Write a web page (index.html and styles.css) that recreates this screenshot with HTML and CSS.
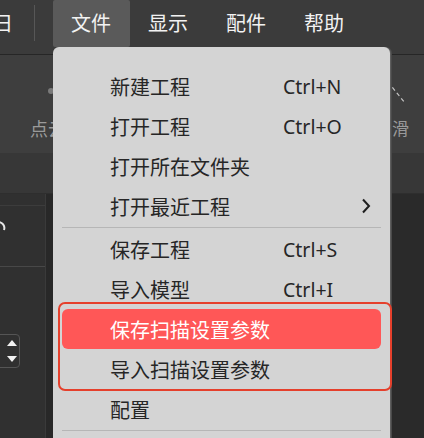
FILE: index.html
```html
<!DOCTYPE html>
<html lang="zh">
<head>
<meta charset="utf-8">
<link rel="stylesheet" href="styles.css">
</head>
<body>
<div class="app">
  <div class="menubar">
    <span class="cut">日</span>
    <span class="vsep"></span>
    <span class="mitem active">文件</span>
    <span class="mitem">显示</span>
    <span class="mitem">配件</span>
    <span class="mitem">帮助</span>
  </div>
  <div class="toolbar">
    <div class="tool left">
      <span class="dot"></span>
      <span class="tlabel">点云</span>
    </div>
    <div class="tool right">
      <svg class="dash" width="20" height="24" viewBox="0 0 20 24"><path d="M1 1 L18 22" stroke="#c4c4c4" stroke-width="1.2" stroke-dasharray="4 3" fill="none"/></svg>
      <span class="tlabel">滑</span>
    </div>
  </div>
  <div class="band"></div>
  <div class="main">
    <div class="lpanel">
      <div class="box">
        <svg class="arc" width="10" height="14" viewBox="0 0 10 14"><path d="M0 2 A6 6 0 0 1 6 10" stroke="#e6e6e6" stroke-width="2" fill="none"/></svg>
      </div>
      <div class="spin">
        <svg width="12" height="30" viewBox="0 0 12 30"><path d="M1 10 L6 4 L11 10 Z" fill="#f2f2f2"/><path d="M1 20 L11 20 L6 26 Z" fill="#f2f2f2"/></svg>
      </div>
    </div>
    <div class="gutter"></div>
    <div class="rest"></div>
  </div>
</div>

<div class="dropdown">
  <div class="row"><span>新建工程</span><span class="sc">Ctrl+N</span></div>
  <div class="row"><span>打开工程</span><span class="sc">Ctrl+O</span></div>
  <div class="row"><span>打开所在文件夹</span><span class="sc"></span></div>
  <div class="row"><span>打开最近工程</span><span class="sc"></span><svg class="arrow" width="10" height="16" viewBox="0 0 10 16"><path d="M2 1.5 L8 8 L2 14.5" stroke="#1e1e1e" stroke-width="2" fill="none"/></svg></div>
  <div class="sep"></div>
  <div class="row"><span>保存工程</span><span class="sc">Ctrl+S</span></div>
  <div class="row"><span>导入模型</span><span class="sc">Ctrl+I</span></div>
  <div class="row hl"><span>保存扫描设置参数</span><span class="sc"></span></div>
  <div class="row"><span>导入扫描设置参数</span><span class="sc"></span></div>
  <div class="row"><span>配置</span><span class="sc"></span></div>
  <div class="sep"></div>
  <div class="mark"></div>
</div>
</body>
</html>
```

FILE: styles.css
```css
html, body {
  margin: 0;
  padding: 0;
  width: 424px;
  height: 438px;
  overflow: hidden;
}
body {
  background: #2b2b2b;
  font-family: "Noto Sans", "Noto Sans CJK SC", sans-serif;
  position: relative;
}
.app {
  display: flex;
  flex-direction: column;
  height: 438px;
}
.menubar {
  height: 54px;
  background: #3b3b3b;
  border-bottom: 1px solid #262626;
  display: flex;
  align-items: flex-start;
  color: #f2f2f2;
  font-size: 20px;
}
.cut {
  margin-left: -7px;
  line-height: 47px;
  height: 47px;
}
.vsep {
  width: 1px;
  height: 36px;
  background: #575757;
  margin: 5px 18px 0 21px;
}
.mitem {
  width: 78px;
  height: 47px;
  line-height: 47px;
  box-sizing: border-box;
  padding-left: 18px;
}
.mitem.active {
  background: #5a5a5a;
  border-radius: 2px;
  width: 77px;
}
.toolbar {
  height: 98px;
  background: #3e3e3e;
  display: flex;
  justify-content: space-between;
  padding: 0 15px 0 30px;
}
.tool {
  display: flex;
  flex-direction: column;
  position: relative;
  justify-content: flex-end;
  padding-bottom: 13px;
}
.tlabel {
  color: #9a9a9a;
  font-size: 18px;
  line-height: 22px;
}
.right .tlabel {
  font-size: 17px;
}
.dot {
  position: absolute;
  left: 18px;
  top: 33px;
  width: 6px;
  height: 6px;
  border-radius: 50%;
  background: #7a7a7a;
}
.dash {
  position: absolute;
  right: 2px;
  top: 26px;
}
.band {
  height: 40px;
  background: #373737;
  border-bottom: 1px solid #2e2e2e;
}
.main {
  flex: 1;
  display: flex;
}
.lpanel {
  width: 45px;
  background: #303030;
  border-right: 1px solid #3a3a3a;
  display: flex;
  flex-direction: column;
  padding-top: 11px;
}
.box {
  height: 60px;
  border-top: 1px solid #3c3c3c;
  border-bottom: 1px solid #484848;
  position: relative;
}
.arc {
  position: absolute;
  left: -2px;
  top: 14px;
}
.spin {
  margin-top: 67px;
  margin-left: -6px;
  width: 26px;
  height: 34px;
  border: 1px solid #555;
  border-radius: 4px;
  display: flex;
  justify-content: flex-end;
  align-items: center;
  padding-right: 1px;
  box-sizing: border-box;
}
.gutter {
  width: 7px;
  background: #282828;
}
.rest {
  flex: 1;
  background: #2a2a2a;
}
.dropdown {
  position: absolute;
  left: 53px;
  top: 47px;
  width: 337px;
  height: 420px;
  background: #d4d4d4;
  border-radius: 6px 6px 0 0;
  box-shadow: 1px 0 0 #5e5e5e, 2px 0 0 #4a4a4a;
  box-sizing: border-box;
  padding: 19px 9px 0;
  color: #262626;
  font-size: 20px;
}
.row {
  height: 40px;
  display: grid;
  grid-template-columns: 173px 1fr auto;
  align-items: center;
  padding: 0 10px 0 48px;
  border-radius: 6px;
}
.row span {
  white-space: nowrap;
}
.sc {
  font-size: 19.5px;
}
.arrow {
  display: block;
}
.row.hl {
  background: #ff5757;
  color: #ffffff;
}
.sep {
  height: 1px;
  background: #b6b6b6;
  margin: 1px 0;
}
.mark {
  position: absolute;
  left: 5px;
  top: 255px;
  width: 334px;
  height: 89px;
  box-sizing: border-box;
  border: 2px solid #e5402c;
  border-radius: 7px;
}
```
